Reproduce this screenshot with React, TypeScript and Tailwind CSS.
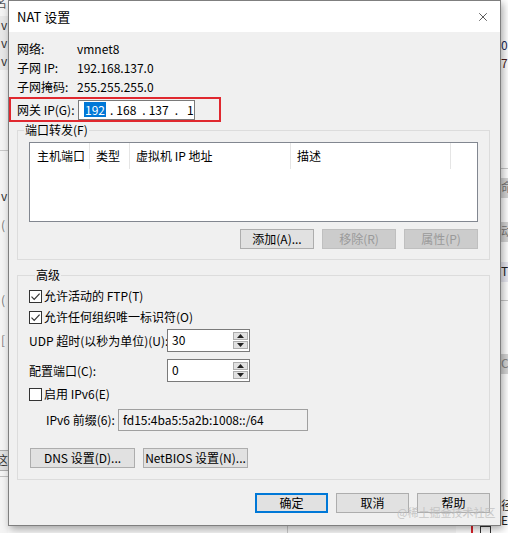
import { X } from 'lucide-react';

// Win32-style helpers
const Check = ({ on }: { on: boolean }) => (
  <span className="w-[13px] h-[13px] border border-[#333333] bg-white flex items-center justify-center shrink-0">
    {on && (
      <svg width="11" height="11" viewBox="0 0 11 11">
        <path d="M1.5 5.6 L4.2 8.3 L9.6 2.6" stroke="#333333" strokeWidth="1.2" fill="none" />
      </svg>
    )}
  </span>
);

const Btn = ({ label, w, disabled, primary }: { label: string; w: string; disabled?: boolean; primary?: boolean }) => (
  <div
    className={[
      'h-[20px] flex items-center justify-center text-[12px] leading-none whitespace-nowrap',
      w,
      disabled
        ? 'bg-[#cccccc] border border-[#bfbfbf] text-[#9a9a9a]'
        : primary
          ? 'bg-[#e1e1e1] border-2 border-[#0078d7] text-black'
          : 'bg-[#e1e1e1] border border-[#adadad] text-black',
    ].join(' ')}
  >
    {label}
  </div>
);

const Spin = ({ value }: { value: string }) => (
  <div className="w-[83px] h-[23px] shrink-0 border border-[#7a7a7a] bg-white flex">
    <span className="flex-1 pl-[4px] pt-[1px] leading-[18px] text-[12px]">{value}</span>
    <div className="w-[16px] flex flex-col gap-[1px] py-[2px] pr-[1px]">
      <div className="h-[8px] border border-[#adadad] bg-[#e1e1e1] flex items-center justify-center">
        <svg width="7" height="4" viewBox="0 0 7 4"><path d="M0 4 L3.5 0 L7 4 Z" fill="#222" /></svg>
      </div>
      <div className="h-[8px] border border-[#adadad] bg-[#e1e1e1] flex items-center justify-center">
        <svg width="7" height="4" viewBox="0 0 7 4"><path d="M0 0 L3.5 4 L7 0 Z" fill="#222" /></svg>
      </div>
    </div>
  </div>
);

const columns = [
  { label: '主机端口', w: 'w-[60px]', pl: 'pl-[7px]' },
  { label: '类型', w: 'w-[40px]', pl: 'pl-[6px]' },
  { label: '虚拟机 IP 地址', w: 'w-[161px]', pl: 'pl-[6px]' },
  { label: '描述', w: 'w-[160px]', pl: 'pl-[6px]' },
];

const info = [
  ['网络:', 'vmnet8'],
  ['子网 IP:', '192.168.137.0'],
  ['子网掩码:', '255.255.255.0'],
];

export default function App() {
  return (
    <div className="relative w-[508px] h-[533px] overflow-hidden bg-[#f7f7f7] text-black font-[family-name:'Noto_Sans_CJK_SC','Noto_Sans',sans-serif]">
      {/* parent window peeking out on the left */}
      <div className="absolute left-0 top-0 w-[8px] h-[533px] bg-[#f4f4f4] text-[12px] leading-[18px] text-[#333]">
        <div className="absolute -left-[5px] -top-[6px] text-[#555]">名</div>
        <div className="absolute left-0 top-[16px] w-[8px] h-[54px] bg-[#e8e8e8]" />
        <div className="absolute left-[1px] top-[16px]">v</div>
        <div className="absolute left-[1px] top-[34px]">v</div>
        <div className="absolute left-[1px] top-[52px]">v</div>
        <div className="absolute left-0 top-[150px] w-[8px] h-px bg-[#c8c8c8]" />
        <div className="absolute left-[1px] top-[187px]">v</div>
        <div className="absolute left-[1px] top-[216px] text-[#777]">(</div>
        <div className="absolute left-[1px] top-[291px] text-[#777]">(</div>
        <div className="absolute left-[1px] top-[331px] text-[#777]">[</div>
        <div className="absolute left-0 top-[450px] w-[8px] h-[21px] bg-[#e1e1e1] border-y border-[#adadad]" />
        <div className="absolute -left-[4px] top-[451px]">这</div>
        <div className="absolute left-0 top-[476px] w-[8px] h-px bg-[#c0c0c0]" />
      </div>

      {/* parent window peeking out on the right */}
      <div className="absolute right-0 top-0 w-[7px] h-[533px] bg-white text-[12px] leading-[18px] text-[#222]">
        <div className="absolute left-0 top-[36px] text-[#1a2a5a]">0.</div>
        <div className="absolute left-0 top-[54px] text-[#4a1a1a]">7.</div>
        <div className="absolute left-0 top-[168px] w-[7px] h-px bg-[#c8c8c8]" />
        <div className="absolute left-0 top-[178px] w-[7px] h-[20px] bg-[#d6d6d6] text-[#777]">命</div>
        <div className="absolute left-0 top-[222px] w-[7px] h-[20px] bg-[#d6d6d6] text-[#777]">动</div>
        <div className="absolute left-0 top-[262px] w-[7px] h-[20px] bg-[#e9e9f2]">T</div>
        <div className="absolute left-0 top-[300px] w-[7px] h-px bg-[#c8c8c8]" />
        <div className="absolute left-0 top-[354px] w-[7px] h-[20px] bg-[#d6d6d6] text-[#888]">CF</div>
        <div className="absolute left-0 top-[496px]">径</div>
        <div className="absolute left-0 top-[511px]">E</div>
      </div>

      {/* strip below the dialog */}
      <div className="absolute left-[287px] top-[526px] w-px h-[7px] bg-[#c8c8c8]" />
      <div className="absolute left-[456px] top-[526px] w-[52px] h-[7px] bg-white" />
      <div className="absolute left-[471px] top-[526px] w-[2px] h-[7px] bg-[#d9232b]" />
      <div className="absolute left-[480px] top-[526px] w-[11px] h-[11px] border border-[#333] bg-white" />

      {/* NAT dialog */}
      <div className="absolute left-[8px] top-0 w-[493px] h-[526px] border border-[#7f7f7f] flex flex-col shadow-[2px_3px_8px_rgba(0,0,0,0.35)]">
        <div className="h-[31px] bg-white flex items-center justify-between pl-[8px] pr-[10px]">
          <span className="text-[13px] leading-none">NAT 设置</span>
          <X className="w-[14px] h-[14px] text-black" strokeWidth={1.1} />
        </div>

        <div className="flex-1 bg-[#f0f0f0] pl-[8px] pr-[10px] text-[12px]">
          <div className="pt-[7px]">
            {info.map(([k, v]) => (
              <div key={k} className="flex h-[19px] leading-[19px]">
                <span className="w-[60px]">{k}</span>
                <span>{v}</span>
              </div>
            ))}
          </div>

          {/* gateway row, outlined in red */}
          <div className="mt-[1px] -ml-[8px] w-[212px] h-[25px] border-2 border-[#e0282f] flex items-center pl-[6px]">
            <span className="w-[61px] leading-none whitespace-nowrap">网关 IP(G):</span>
            <div className="w-[117px] h-[20px] border border-[#7a7a7a] bg-white flex items-center leading-[15px] whitespace-nowrap">
              <span className="ml-[5px] px-[1px] bg-[#0078d7] text-white">192</span>
              <span className="ml-[4px]">.</span>
              <span className="ml-[3px]">168</span>
              <span className="ml-[6px]">.</span>
              <span className="ml-[3px]">137</span>
              <span className="ml-[6px]">.</span>
              <span className="ml-[9px]">1</span>
            </div>
          </div>

          {/* port forwarding */}
          <fieldset className="border border-[#dcdcdc] pb-[10px]">
            <legend className="ml-[6px] px-[1px] leading-[16px]">端口转发(F)</legend>
            <div className="mx-[11px] mt-[4px] h-[80px] border border-[#828790] bg-white flex items-start">
              {columns.map((c) => (
                <div key={c.label} className={`${c.w} ${c.pl} h-[26px] border-r border-[#e5e5e5] leading-[26px] whitespace-nowrap`}>
                  {c.label}
                </div>
              ))}
            </div>
            <div className="mx-[11px] mt-[7px] flex justify-end gap-[8px]">
              <Btn label="添加(A)..." w="w-[74px]" />
              <Btn label="移除(R)" w="w-[74px]" disabled />
              <Btn label="属性(P)" w="w-[74px]" disabled />
            </div>
          </fieldset>

          {/* advanced */}
          <fieldset className="mt-[7px] border border-[#dcdcdc] pl-[11px] pb-[11px]">
            <legend className="ml-[6px] px-[1px] leading-[16px]">高级</legend>
            <div className="mt-[3px] h-[20px] flex items-center gap-[2px]">
              <Check on />
              <span>允许活动的 FTP(T)</span>
            </div>
            <div className="mt-[1px] h-[20px] flex items-center gap-[2px]">
              <Check on />
              <span>允许任何组织唯一标识符(O)</span>
            </div>
            <div className="mt-[2px] flex items-center">
              <span className="w-[138px] shrink-0 whitespace-nowrap">UDP 超时(以秒为单位)(U):</span>
              <Spin value="30" />
            </div>
            <div className="mt-[7px] flex items-center">
              <span className="w-[138px] shrink-0 whitespace-nowrap">配置端口(C):</span>
              <Spin value="0" />
            </div>
            <div className="mt-[2px] h-[20px] flex items-center gap-[2px]">
              <Check on={false} />
              <span>启用 IPv6(E)</span>
            </div>
            <div className="mt-[5px] ml-[17px] flex items-center">
              <span className="w-[72px] shrink-0 whitespace-nowrap">IPv6 前缀(6):</span>
              <div className="w-[190px] h-[22px] border border-[#a0a0a0] bg-[#f0f0f0] pl-[4px] leading-[20px]">
                fd15:4ba5:5a2b:1008::/64
              </div>
            </div>
            <div className="mt-[17px] ml-[1px] flex gap-[8px]">
              <Btn label="DNS 设置(D)..." w="w-[105px]" />
              <Btn label="NetBIOS 设置(N)..." w="w-[105px]" />
            </div>
          </fieldset>

          <div className="mt-[13px] flex justify-end gap-[8px]">
            <Btn label="确定" w="w-[73px]" primary />
            <Btn label="取消" w="w-[73px]" />
            <Btn label="帮助" w="w-[73px]" />
          </div>
        </div>
      </div>

      {/* site watermark */}
      <div className="absolute left-[397px] top-[504px] text-[11px] leading-[16px] text-[#bdbdbd] opacity-80">
        @稀土掘金技术社区
      </div>
    </div>
  );
}
